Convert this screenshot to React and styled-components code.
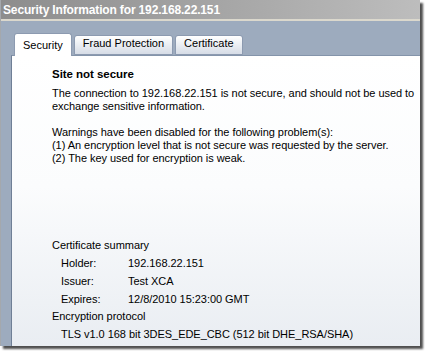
import React from 'react';
import styled, {createGlobalStyle} from 'styled-components';

const GlobalStyle = createGlobalStyle`
  html, body {
    margin: 0;
    padding: 0;
    background: #ffffff;
  }
  body {
    font-family: "Liberation Sans", Arial, sans-serif;
    width: 425px;
    height: 351px;
    overflow: hidden;
  }
`;

const Window = styled.div`
  width: 420px;
  height: 346px;
  display: flex;
  flex-direction: column;
  background: #9dabbe;
  box-shadow: 3px 3px 2px rgba(20, 20, 20, 0.75);
  box-sizing: border-box;
  border-left: 1px solid #a4a8ad;
`;

const TitleBar = styled.div`
  height: 19px;
  line-height: 20px;
  padding-left: 2px;
  background: linear-gradient(to right, #8d8d8d, #a9a9a9 60%, #bdbdbd);
  border-bottom: 2px solid #dbd8cd;
  color: #ffffff;
  font-size: 12px;
  font-weight: bold;
  letter-spacing: -0.15px;
  white-space: nowrap;
`;

const Body = styled.div`
  flex: 1;
  display: flex;
  flex-direction: column;
  padding-left: 10px;
  min-height: 0;
`;

const TabStrip = styled.div`
  height: 34px;
  display: flex;
  align-items: flex-end;
  gap: 2px;
  padding-left: 3px;
  box-sizing: border-box;
`;

const Tab = styled.div`
  position: relative;
  height: ${p => (p.$active ? '23px' : '20px')};
  margin-bottom: ${p => (p.$active ? '-1px' : '0')};
  padding: 0 8px 4px;
  box-sizing: border-box;
  display: flex;
  align-items: flex-end;
  font-size: 11px;
  line-height: 13px;
  color: #000;
  border: 1px solid #8c9ab0;
  border-bottom: ${p => (p.$active ? 'none' : '1px solid #8c9ab0')};
  border-radius: 3px 3px 0 0;
  background: ${p =>
    p.$active ? '#ffffff' : 'linear-gradient(to bottom, #ffffff, #eef1f5 40%, #d6dce6)'};
  z-index: ${p => (p.$active ? 2 : 1)};
`;

const Panel = styled.div`
  flex: 1;
  display: flex;
  flex-direction: column;
  border-top: 1px solid #8494aa;
  border-left: 1px solid #6f7f96;
  background: linear-gradient(to bottom, #ffffff 0%, #fbfcfd 45%, #e9edf2 100%);
  padding: 11px 0 2px 40px;
  font-size: 11px;
  letter-spacing: -0.04px;
  color: #000;
`;

const Heading = styled.div`
  font-weight: bold;
  font-size: 11.5px;
  line-height: 14px;
`;

const Para = styled.div`
  line-height: 13px;
  margin-top: ${p => p.$gap || 0}px;
  white-space: nowrap;
`;

const Summary = styled.div`
  margin-top: auto;
  line-height: 17.8px;
`;

const Details = styled.div`
  display: grid;
  grid-template-columns: 67px auto;
  padding-left: 9px;
`;

const Indented = styled.div`
  padding-left: 9px;
`;

export default function App() {
  return (
    <>
      <GlobalStyle />
      <Window>
        <TitleBar>Security Information for 192.168.22.151</TitleBar>
        <Body>
          <TabStrip>
            <Tab $active>Security</Tab>
            <Tab>Fraud Protection</Tab>
            <Tab>Certificate</Tab>
          </TabStrip>
          <Panel>
            <Heading>Site not secure</Heading>
            <Para $gap={6}>
              The connection to 192.168.22.151 is not secure, and should not be used to
              <br />
              exchange sensitive information.
            </Para>
            <Para $gap={13}>
              Warnings have been disabled for the following problem(s):
              <br />
              (1) An encryption level that is not secure was requested by the server.
              <br />
              (2) The key used for encryption is weak.
            </Para>
            <Summary>
              <div>Certificate summary</div>
              <Details>
                <span>Holder:</span>
                <span>192.168.22.151</span>
                <span>Issuer:</span>
                <span>Test XCA</span>
                <span>Expires:</span>
                <span>12/8/2010 15:23:00 GMT</span>
              </Details>
              <div>Encryption protocol</div>
              <Indented>TLS v1.0 168 bit 3DES_EDE_CBC (512 bit DHE_RSA/SHA)</Indented>
            </Summary>
          </Panel>
        </Body>
      </Window>
    </>
  );
}
